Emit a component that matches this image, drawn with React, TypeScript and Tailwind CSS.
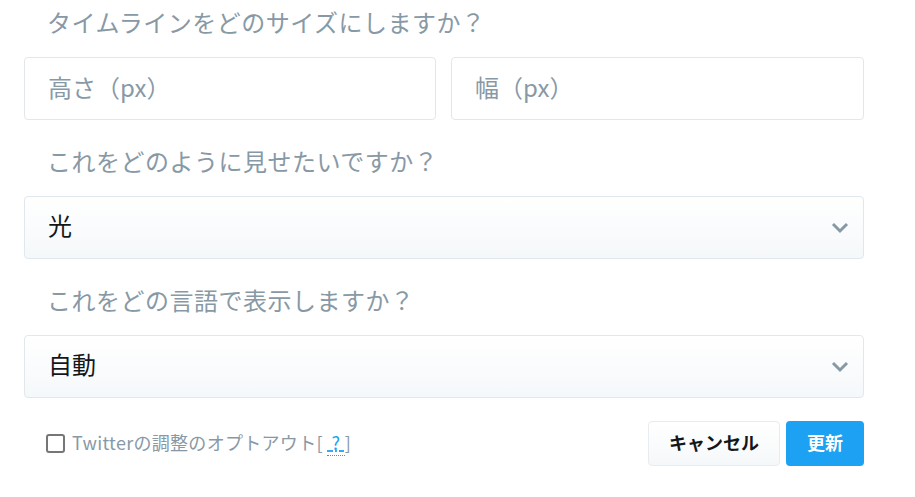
import { useState } from "react";

const font = { fontFamily: '"Noto Sans CJK JP", "Noto Sans", sans-serif' };

function Chevron() {
  return (
    <svg width="18" height="12" viewBox="0 0 18 12" className="shrink-0">
      <polyline points="2,2 9,9 16,2" fill="none" stroke="#8899a6" strokeWidth="3" strokeLinejoin="miter" />
    </svg>
  );
}

function Select({ value }: { value: string }) {
  return (
    <div className="flex h-[63px] items-center justify-between rounded-[4px] border border-[#e1e8ed] bg-gradient-to-b from-white to-[#f5f8fa] pl-[23px] pr-[14px]">
      <span className="-mt-[5px] text-[24px] text-[#14171a]">{value}</span>
      <Chevron />
    </div>
  );
}

function Label({ children, first }: { children: string; first?: boolean }) {
  return (
    <div className={`${first ? "" : "mt-[27px]"} mb-[17px] h-[32px] pl-[23px] text-[24px] leading-[28px] tracking-[0.5px] text-[#8899a6]`}>
      {children}
    </div>
  );
}

export default function App() {
  const [checked, setChecked] = useState(false);

  return (
    <div className="min-h-screen bg-white" style={font}>
      <div className="w-[840px] ml-[24px] pt-[8px]">
        <Label first>タイムラインをどのサイズにしますか？</Label>
        <div className="flex gap-[15px]">
          <input
            placeholder="高さ（px）"
            className="h-[63px] w-[412px] rounded-[4px] border border-[#e1e8ed] bg-white pb-[5px] pl-[23px] text-[24px] outline-none placeholder:text-[#8899a6]"
          />
          <input
            placeholder="幅（px）"
            className="h-[63px] w-[413px] rounded-[4px] border border-[#e1e8ed] bg-white pb-[5px] pl-[23px] text-[24px] outline-none placeholder:text-[#8899a6]"
          />
        </div>

        <Label>これをどのように見せたいですか？</Label>
        <Select value="光" />

        <Label>これをどの言語で表示しますか？</Label>
        <Select value="自動" />

        <div className="mt-[23px] flex items-center justify-between">
          <div
            className="flex cursor-pointer items-center gap-[7px] pl-[22px] text-[18px] text-[#8899a6]"
            onClick={() => setChecked(!checked)}
          >
            <div
              role="checkbox"
              aria-checked={checked}
              className={`h-[19px] w-[19px] shrink-0 rounded-[3px] border-2 border-[#767676] ${checked ? "bg-[#1da1f2]" : "bg-white"}`}
            />
            <span className="-mt-[3px] tracking-[0.3px]">
              Twitterの調整のオプトアウト[{"\u00a0"}
              <span className="border-b border-dotted border-[#1da1f2] text-[#1da1f2] underline decoration-dotted">
                {"\u00a0"}?{"\u00a0"}
              </span>
              ]
            </span>
          </div>
          <div className="flex gap-[6px]">
            <button className="h-[45px] w-[132px] rounded-[4px] border border-[#e6ecf0] bg-gradient-to-b from-white to-[#f5f8fa] pb-[3px] text-[18px] font-bold text-[#14171a]">
              キャンセル
            </button>
            <button className="h-[45px] w-[78px] rounded-[4px] bg-[#1da1f2] pb-[3px] text-[18px] font-bold text-white">
              更新
            </button>
          </div>
        </div>
      </div>
    </div>
  );
}
